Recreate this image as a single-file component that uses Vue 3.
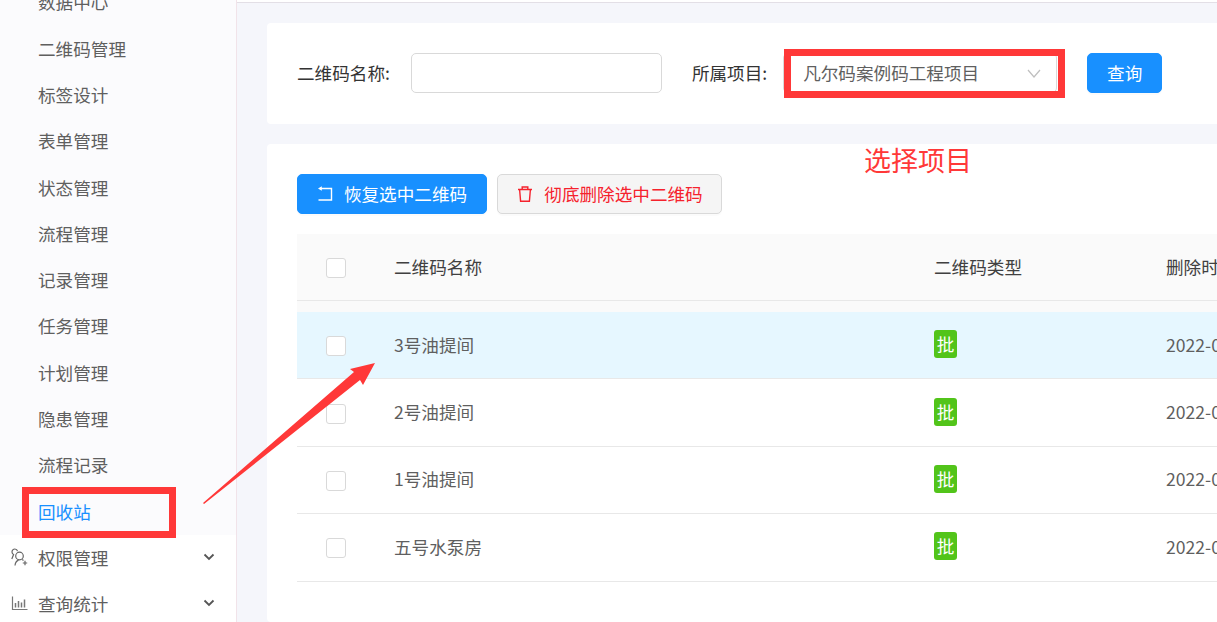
<template>
  <div class="page">
    <aside class="sidebar">
      <ul class="submenu">
        <li
          v-for="item in menuItems"
          :key="item"
          class="menu-item"
          :class="{ active: item === '回收站' }"
        >
          {{ item }}
        </li>
      </ul>
      <div class="menu-parents">
        <div class="menu-parent">
          <svg class="menu-icon" viewBox="0 0 17 18" fill="none" stroke="#666" stroke-width="1.2">
            <circle cx="8.5" cy="8" r="3.8" />
            <path d="M6.5 3.2C6.2 1.8 5.2 1 3.9 1 2.2 1 1 2.3 1 3.9c0 1.2.7 2.1 1.6 2.6L.8 11" />
            <path d="M4 17.5c.3-3 1.6-4.7 3.6-5.4M11.2 11.5l1.3 1" />
            <path d="M14 12.8v4.4M11.8 15h4.4" />
          </svg>
          <span class="parent-title">权限管理</span>
          <svg class="menu-arrow" viewBox="0 0 12 8" fill="none" stroke="#555" stroke-width="1.8">
            <path d="M1.5 1.5 6 6l4.5-4.5" />
          </svg>
        </div>
        <div class="menu-parent">
          <svg class="menu-icon" viewBox="0 0 17 18" fill="none" stroke="#777" stroke-width="1.2">
            <path d="M1.5 2.5v13h15" />
            <path d="M4.5 9v4.5M7.5 7v6.5M10.5 8.5v5M13.5 5.5v8" stroke-width="1.5" />
          </svg>
          <span class="parent-title">查询统计</span>
          <svg class="menu-arrow" viewBox="0 0 12 8" fill="none" stroke="#555" stroke-width="1.8">
            <path d="M1.5 1.5 6 6l4.5-4.5" />
          </svg>
        </div>
      </div>
    </aside>

    <main class="main">
      <section class="card search-card">
        <label class="field-label">二维码名称:</label>
        <div class="input"></div>
        <label class="field-label project-label">所属项目:</label>
        <div class="select">
          <span class="select-value">凡尔码案例码工程项目</span>
          <svg class="select-arrow" viewBox="0 0 14 9" fill="none" stroke="#bfbfbf" stroke-width="1.2">
            <path d="M1 1l6 7 6-7" />
          </svg>
        </div>
        <button class="btn primary query-btn">查询</button>
      </section>

      <section class="card table-card">
        <div class="toolbar">
          <button class="btn primary restore-btn">
            <svg class="btn-icon" viewBox="0 0 16 16" fill="none" stroke="#fff" stroke-width="1.4">
              <path d="M3 2.5h11.5V14H1.5" />
              <path d="M4.8.2 1 2.5l3.8 2.3z" fill="#fff" stroke="none" />
            </svg>
            恢复选中二维码
          </button>
          <button class="btn danger-btn">
            <svg class="btn-icon" viewBox="0 0 16 16" fill="none" stroke="#f5222d" stroke-width="1.4">
              <path d="M1 3.5h14M5.2 3.5V1h5.6v2.5" />
              <path d="M2.6 3.5l1 11.8h8.8l1-11.8" />
            </svg>
            彻底删除选中二维码
          </button>
        </div>

        <div class="table">
          <div class="row head">
            <span class="checkbox"></span>
            <span class="cell">二维码名称</span>
            <span class="cell">二维码类型</span>
            <span class="cell">删除时间</span>
          </div>
          <div class="head-gap"></div>
          <div
            v-for="(row, i) in rows"
            :key="row"
            class="row"
            :class="{ selected: i === 0 }"
          >
            <span class="checkbox"></span>
            <span class="cell">{{ row }}</span>
            <span class="cell"><em class="tag">批</em></span>
            <span class="cell">2022-04-18 10:32:16</span>
          </div>
        </div>
      </section>
    </main>

    <!-- annotations drawn on top of the screenshot -->
    <div class="mark mark-recycle"></div>
    <div class="mark mark-select"></div>
    <div class="mark-text">选择项目</div>
    <svg class="mark-arrow" viewBox="0 0 1217 622">
      <polygon points="203,503 354,372 350,369 375,363 363,385 360,380 204,504" fill="#ff3838" />
    </svg>
  </div>
</template>

<script setup>
const menuItems = [
  '数据中心',
  '二维码管理',
  '标签设计',
  '表单管理',
  '状态管理',
  '流程管理',
  '记录管理',
  '任务管理',
  '计划管理',
  '隐患管理',
  '流程记录',
  '回收站',
];

const rows = ['3号油提间', '2号油提间', '1号油提间', '五号水泵房'];
</script>

<style>
html,
body {
  margin: 0;
  overflow: hidden;
}
</style>

<style scoped>
.page {
  position: relative;
  display: flex;
  width: 1217px;
  height: 622px;
  overflow: hidden;
  background: #f5f6fb;
  font-family: "Noto Sans CJK SC", "Liberation Sans", sans-serif;
  font-size: 17.6px;
  color: #5f5f5f;
}

.sidebar {
  flex: none;
  width: 236px;
  height: 622px;
  background: #fff;
  border-right: 1px solid #f1e3e9;
}

.submenu {
  margin: -20.6px 0 0;
  padding: 0;
  list-style: none;
  background: #fbfbfd;
}

.menu-item {
  height: 46.3px;
  line-height: 46.3px;
  padding-left: 38px;
}

.menu-item.active {
  color: #1890ff;
}

.menu-parents {
  margin-top: -1px;
}

.menu-parent {
  display: flex;
  align-items: center;
  height: 46.2px;
  padding-left: 11px;
}

.menu-icon {
  flex: none;
  width: 17px;
  height: 18px;
}

.parent-title {
  margin-left: 10px;
}

.menu-arrow {
  width: 12px;
  height: 8px;
  margin-left: 95px;
}

.main {
  flex: 1;
  min-width: 0;
  box-sizing: border-box;
  padding: 20px 0 0 30px;
  border-top: 3px solid;
  border-image: linear-gradient(#fff 2px, #e3dfe6 2px) 3;
}

.card {
  background: #fff;
  border-radius: 4px 0 0 4px;
}

.search-card {
  display: flex;
  align-items: center;
  height: 101px;
  box-sizing: border-box;
  padding: 0 0 1px 30px;
  color: #333;
}

.field-label {
  flex: none;
  padding-bottom: 1px;
}

.input {
  flex: none;
  width: 251px;
  height: 40px;
  margin-left: 21px;
  box-sizing: border-box;
  background: #fff;
  border: 1px solid #d9d9d9;
  border-radius: 5px;
}

.project-label {
  margin-left: 30px;
}

.select {
  flex: none;
  display: flex;
  align-items: center;
  justify-content: space-between;
  width: 274px;
  height: 40px;
  margin-left: 16px;
  padding: 0 15px 0 19px;
  box-sizing: border-box;
  color: #5f5f5f;
  background: #fff;
  border: 1px solid #d9d9d9;
  border-radius: 5px;
}

.select-value {
  padding-bottom: 1px;
}

.select-arrow {
  width: 14px;
  height: 9px;
}

.btn {
  display: flex;
  align-items: center;
  justify-content: center;
  height: 40px;
  padding: 0 0 2px;
  box-sizing: border-box;
  font: inherit;
  border: 1px solid transparent;
  border-radius: 5px;
  box-shadow: 0 2px 0 rgba(0, 0, 0, 0.015);
}

.primary {
  color: #fff;
  background: #1890ff;
  border-color: #1890ff;
}

.query-btn {
  flex: none;
  width: 75px;
  margin-left: 30px;
}

.table-card {
  height: 478px;
  margin-top: 20px;
  padding: 30px 0 0 30px;
  box-sizing: border-box;
}

.toolbar {
  display: flex;
  gap: 10px;
  margin-bottom: 20px;
}

.restore-btn {
  width: 190px;
}

.danger-btn {
  width: 225px;
  padding-left: 1px;
  color: #f5222d;
  background: #f5f5f5;
  border-color: #d9d9d9;
}

.btn-icon {
  flex: none;
  width: 16px;
  height: 16px;
  margin-right: 11px;
  margin-top: 2px;
}

.table {
  overflow: hidden;
}

.row {
  display: grid;
  grid-template-columns: 97px 540px 232px 400px;
  align-items: center;
  height: 67.4px;
  box-sizing: border-box;
  border-bottom: 1px solid #e8e8e8;
  white-space: nowrap;
}

.row.head {
  height: 67px;
  background: #fafafa;
}

.row.head .cell {
  color: #404040;
}

.head-gap {
  height: 11px;
  background: #fafafa;
}

.row.selected {
  background: #e6f7ff;
}

.cell {
  padding-bottom: 2px;
}

.checkbox {
  width: 20px;
  height: 20px;
  margin: 2px 0 0 29px;
  box-sizing: border-box;
  background: #fff;
  border: 1px solid #d9d9d9;
  border-radius: 3px;
}

.tag {
  display: block;
  width: 23px;
  height: 28px;
  line-height: 28px;
  text-align: center;
  font-style: normal;
  font-size: 17.6px;
  color: #fff;
  background: #52c41a;
  border-radius: 3px;
}

.mark {
  position: absolute;
  box-sizing: border-box;
  border: 7px solid #ff3838;
}

.mark-recycle {
  left: 22px;
  top: 487px;
  width: 154px;
  height: 51px;
}

.mark-select {
  left: 784px;
  top: 49px;
  width: 281px;
  height: 49px;
}

.mark-text {
  position: absolute;
  left: 864px;
  top: 140px;
  font-size: 27px;
  line-height: 40px;
  color: #ff3838;
}

.mark-arrow {
  position: absolute;
  left: 0;
  top: 0;
  width: 1217px;
  height: 622px;
  pointer-events: none;
}
</style>
